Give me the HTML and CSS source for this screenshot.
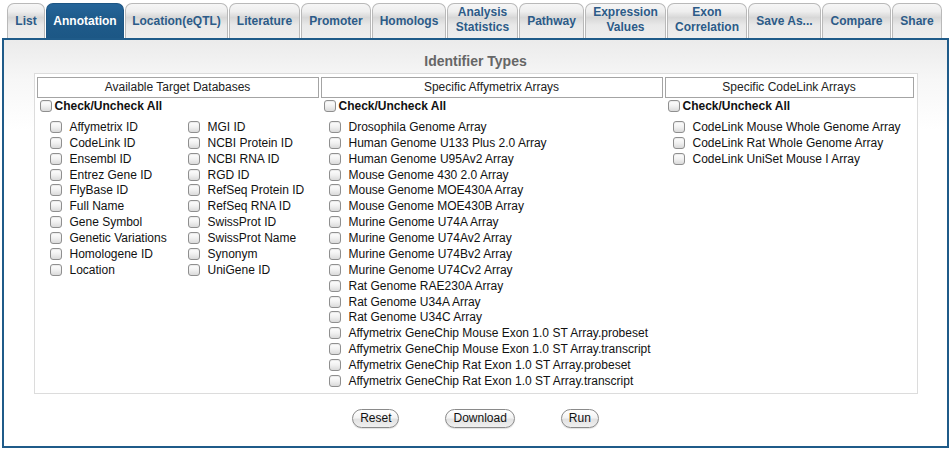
FILE: index.html
```html
<!DOCTYPE html>
<html>
<head>
<meta charset="utf-8">
<title>Annotation</title>
<link rel="stylesheet" href="styles.css">
</head>
<body>
<nav class="tabs">
  <a class="tab">List</a>
  <a class="tab active">Annotation</a>
  <a class="tab">Location(eQTL)</a>
  <a class="tab">Literature</a>
  <a class="tab">Promoter</a>
  <a class="tab">Homologs</a>
  <a class="tab two">Analysis<br>Statistics</a>
  <a class="tab">Pathway</a>
  <a class="tab two">Expression<br>Values</a>
  <a class="tab two">Exon<br>Correlation</a>
  <a class="tab">Save As...</a>
  <a class="tab">Compare</a>
  <a class="tab">Share</a>
</nav>
<main class="panel">
  <h2 class="title">Identifier Types</h2>
  <div class="targets">
    <div class="col-head">Available Target Databases</div>
    <div class="col-head">Specific Affymetrix Arrays</div>
    <div class="col-head">Specific CodeLink Arrays</div>

    <div class="col col-db">
      <label class="checkall"><input type="checkbox"><span>Check/Uncheck All</span></label>
      <div class="db-grid">
        <ul class="items">
          <li><label><input type="checkbox"><span>Affymetrix ID</span></label></li>
          <li><label><input type="checkbox"><span>CodeLink ID</span></label></li>
          <li><label><input type="checkbox"><span>Ensembl ID</span></label></li>
          <li><label><input type="checkbox"><span>Entrez Gene ID</span></label></li>
          <li><label><input type="checkbox"><span>FlyBase ID</span></label></li>
          <li><label><input type="checkbox"><span>Full Name</span></label></li>
          <li><label><input type="checkbox"><span>Gene Symbol</span></label></li>
          <li><label><input type="checkbox"><span>Genetic Variations</span></label></li>
          <li><label><input type="checkbox"><span>Homologene ID</span></label></li>
          <li><label><input type="checkbox"><span>Location</span></label></li>
        </ul>
        <ul class="items">
          <li><label><input type="checkbox"><span>MGI ID</span></label></li>
          <li><label><input type="checkbox"><span>NCBI Protein ID</span></label></li>
          <li><label><input type="checkbox"><span>NCBI RNA ID</span></label></li>
          <li><label><input type="checkbox"><span>RGD ID</span></label></li>
          <li><label><input type="checkbox"><span>RefSeq Protein ID</span></label></li>
          <li><label><input type="checkbox"><span>RefSeq RNA ID</span></label></li>
          <li><label><input type="checkbox"><span>SwissProt ID</span></label></li>
          <li><label><input type="checkbox"><span>SwissProt Name</span></label></li>
          <li><label><input type="checkbox"><span>Synonym</span></label></li>
          <li><label><input type="checkbox"><span>UniGene ID</span></label></li>
        </ul>
      </div>
    </div>

    <div class="col">
      <label class="checkall"><input type="checkbox"><span>Check/Uncheck All</span></label>
      <ul class="items">
        <li><label><input type="checkbox"><span>Drosophila Genome Array</span></label></li>
        <li><label><input type="checkbox"><span>Human Genome U133 Plus 2.0 Array</span></label></li>
        <li><label><input type="checkbox"><span>Human Genome U95Av2 Array</span></label></li>
        <li><label><input type="checkbox"><span>Mouse Genome 430 2.0 Array</span></label></li>
        <li><label><input type="checkbox"><span>Mouse Genome MOE430A Array</span></label></li>
        <li><label><input type="checkbox"><span>Mouse Genome MOE430B Array</span></label></li>
        <li><label><input type="checkbox"><span>Murine Genome U74A Array</span></label></li>
        <li><label><input type="checkbox"><span>Murine Genome U74Av2 Array</span></label></li>
        <li><label><input type="checkbox"><span>Murine Genome U74Bv2 Array</span></label></li>
        <li><label><input type="checkbox"><span>Murine Genome U74Cv2 Array</span></label></li>
        <li><label><input type="checkbox"><span>Rat Genome RAE230A Array</span></label></li>
        <li><label><input type="checkbox"><span>Rat Genome U34A Array</span></label></li>
        <li><label><input type="checkbox"><span>Rat Genome U34C Array</span></label></li>
        <li><label><input type="checkbox"><span>Affymetrix GeneChip Mouse Exon 1.0 ST Array.probeset</span></label></li>
        <li><label><input type="checkbox"><span>Affymetrix GeneChip Mouse Exon 1.0 ST Array.transcript</span></label></li>
        <li><label><input type="checkbox"><span>Affymetrix GeneChip Rat Exon 1.0 ST Array.probeset</span></label></li>
        <li><label><input type="checkbox"><span>Affymetrix GeneChip Rat Exon 1.0 ST Array.transcript</span></label></li>
      </ul>
    </div>

    <div class="col">
      <label class="checkall"><input type="checkbox"><span>Check/Uncheck All</span></label>
      <ul class="items">
        <li><label><input type="checkbox"><span>CodeLink Mouse Whole Genome Array</span></label></li>
        <li><label><input type="checkbox"><span>CodeLink Rat Whole Genome Array</span></label></li>
        <li><label><input type="checkbox"><span>CodeLink UniSet Mouse I Array</span></label></li>
      </ul>
    </div>
  </div>
  <div class="actions">
    <button class="btn" type="button">Reset</button>
    <button class="btn" type="button">Download</button>
    <button class="btn" type="button">Run</button>
  </div>
</main>
</body>
</html>
```
FILE: styles.css
```css
* { box-sizing: border-box; }

html, body {
  margin: 0;
  padding: 0;
  background: #fff;
  font-family: "Liberation Sans", Arial, sans-serif;
  font-size: 12px;
  color: #111;
}

.tabs {
  display: flex;
  gap: 1px;
  padding: 3px 0 0 7px;
  height: 38px;
}

.tab {
  flex: none;
  height: 35px;
  display: flex;
  align-items: center;
  justify-content: center;
  text-align: center;
  font-weight: bold;
  font-size: 12px;
  line-height: 15px;
  color: #2c5b88;
  border: 1px solid #b9b9b9;
  border-bottom: none;
  border-radius: 7px 7px 0 0;
  background: linear-gradient(#f6f6f6 0%, #eeeeee 22%, #d7d7d7 40%, #e9e9e9 62%, #eeeeee 100%);
  padding-top: 1px;
}

.tab.two {
  padding-top: 0;
  padding-bottom: 3px;
}

.tab:nth-child(1) { width: 38px; }
.tab:nth-child(2) { width: 78px; }
.tab:nth-child(3) { width: 103px; }
.tab:nth-child(4) { width: 71px; }
.tab:nth-child(5) { width: 70px; }
.tab:nth-child(6) { width: 74px; }
.tab:nth-child(7) { width: 71px; }
.tab:nth-child(8) { width: 65px; }
.tab:nth-child(9) { width: 81px; }
.tab:nth-child(10) { width: 80px; }
.tab:nth-child(11) { width: 73px; }
.tab:nth-child(12) { width: 69px; }
.tab:nth-child(13) { width: 50px; }

.tab.active {
  color: #fff;
  background: linear-gradient(#25659a 0%, #1f5c8c 40%, #1c5785 100%);
  border-color: #1c5583;
}

.panel {
  margin: 0 2px;
  border: 2px solid #1f5b89;
  background: linear-gradient(#ebebeb 0px, #f7f7f7 40px, #ffffff 90px);
  padding: 12px 0 18px;
}

.title {
  margin: 0;
  text-align: center;
  font-size: 14px;
  line-height: 18px;
  font-weight: bold;
  color: #666;
}

.targets {
  width: 884px;
  margin: 3px auto 0;
  border: 1px solid #dcdcdc;
  background: #fff;
  padding: 3px 3px 4px 2px;
  display: grid;
  grid-template-columns: 282px 342px 249px;
  column-gap: 2px;
  row-gap: 0;
}

.col-head {
  border: 1px solid #a4a4a4;
  height: 21px;
  line-height: 19px;
  text-align: center;
  color: #222;
}

.col {
  padding: 0 0 0 3px;
}

.checkall {
  display: flex;
  align-items: center;
  height: 15px;
  gap: 3px;
  font-weight: bold;
  color: #111;
}

.items {
  list-style: none;
  margin: 6px 0 0;
  padding: 0 0 0 5px;
}

.items li {
  height: 15.875px;
}

.items label {
  display: flex;
  align-items: center;
  height: 15.875px;
  gap: 8px;
  color: #111;
}

.db-grid {
  display: grid;
  grid-template-columns: 138px 1fr;
}

.col-db .items {
  padding-left: 10px;
}

input[type="checkbox"] {
  -webkit-appearance: none;
  appearance: none;
  flex: none;
  width: 12px;
  height: 12px;
  margin: 0;
  border: 1px solid #8f8f8f;
  border-radius: 3px;
  background: linear-gradient(#ffffff 0%, #f1f1f1 50%, #dadada 100%);
  box-shadow: inset 0 1px 1px rgba(0, 0, 0, 0.08);
}

.actions {
  display: flex;
  justify-content: center;
  gap: 46px;
  margin-top: 15px;
}

.btn {
  height: 19px;
  padding: 0 7px;
  border: 1px solid #8a8a8a;
  border-radius: 10px;
  background: linear-gradient(#ffffff 0%, #f4f4f4 45%, #e2e2e2 55%, #f0f0f0 100%);
  font-family: "Liberation Sans", Arial, sans-serif;
  font-size: 12px;
  line-height: 17px;
  color: #111;
  box-shadow: 0 1px 1px rgba(0, 0, 0, 0.12);
}
```
